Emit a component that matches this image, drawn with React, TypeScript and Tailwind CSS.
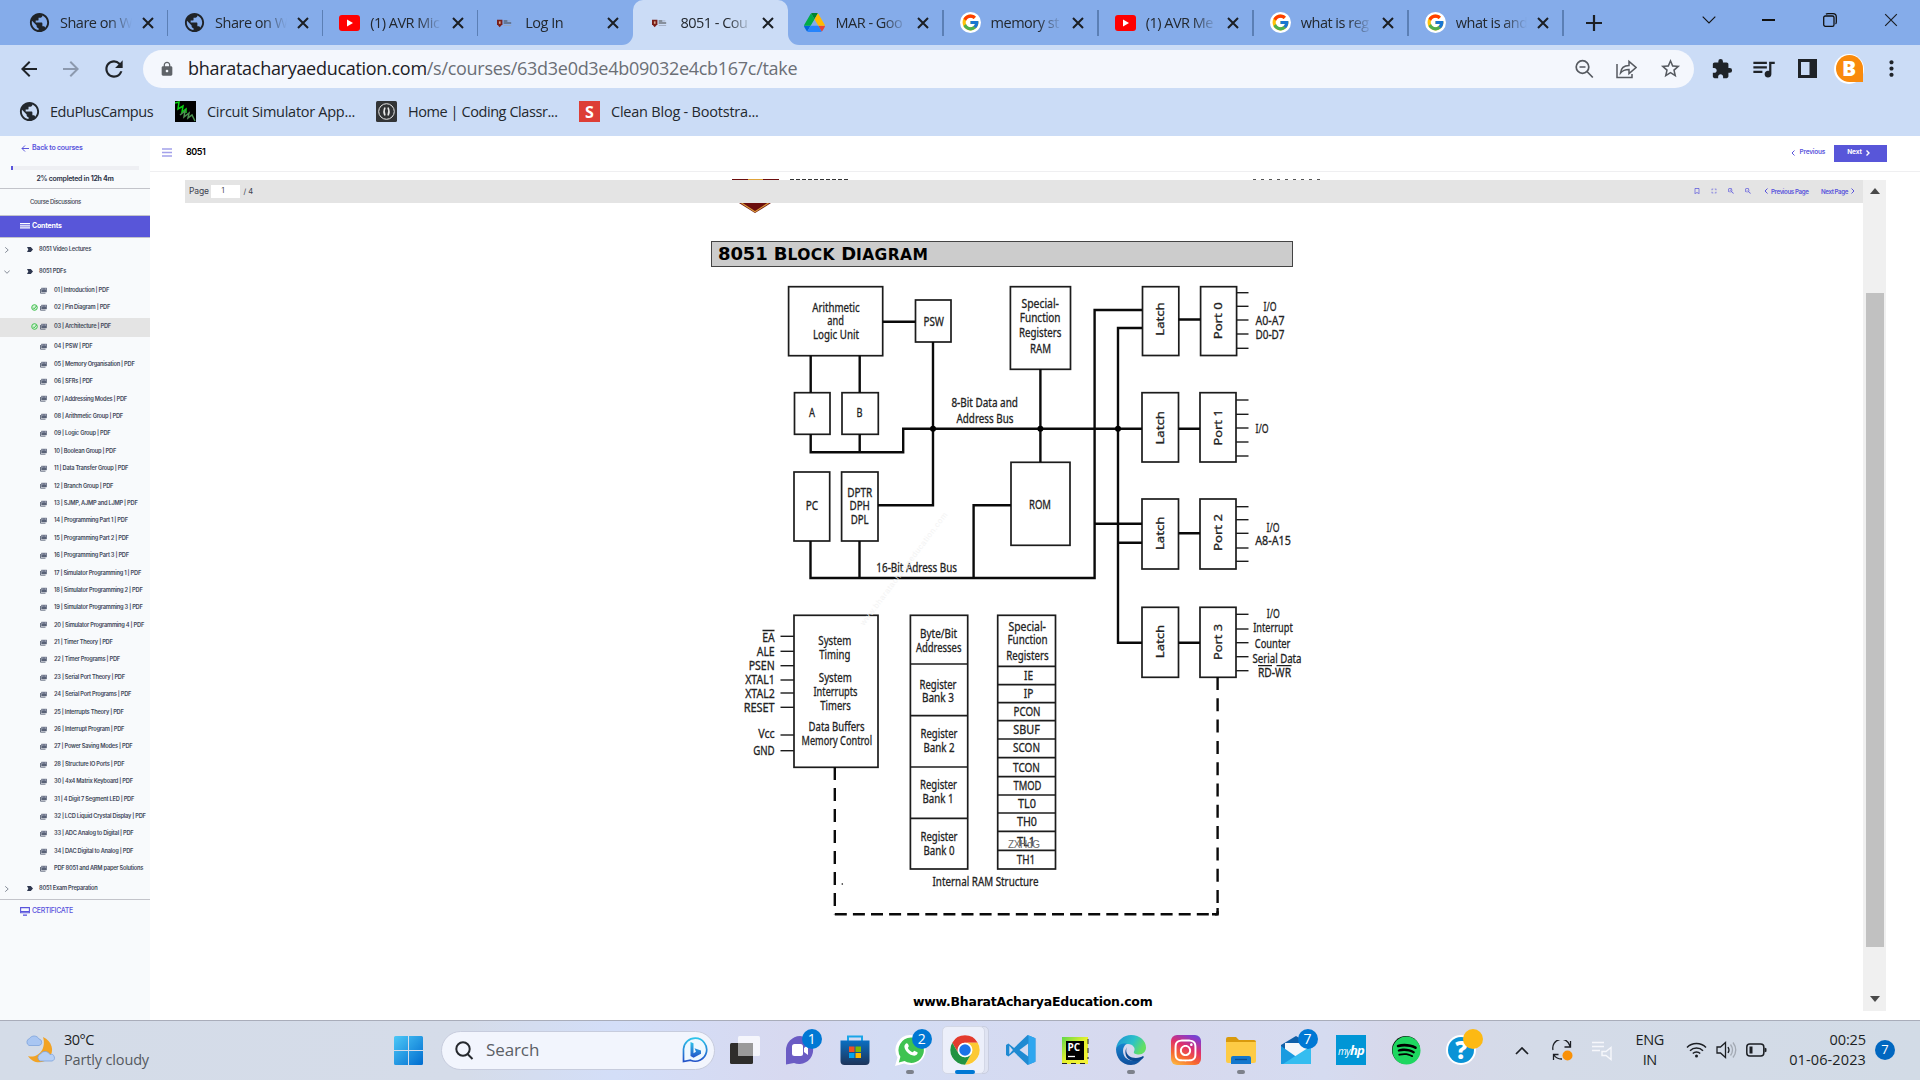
import React from "react";
import {
  MdPublic, MdArrowBack, MdArrowForward, MdRefresh, MdLock, MdStarBorder, MdExtension,
  MdQueueMusic, MdMoreVert, MdZoomIn, MdZoomOut, MdFullscreen, MdBookmarkBorder,
} from "react-icons/md";
import { FcGoogle } from "react-icons/fc";
import { FaSpotify, FaInstagram } from "react-icons/fa";

/* ---------- browser chrome ---------- */

const Crest = () => (
  <svg viewBox="0 0 20 12" className="h-[10px] w-[17px]">
    <path d="M1 2h6.500v5.500L4.200 11 1 7.500z" fill="#7a1f1a" />
    <path d="M3.300 4h2v3h-2z" fill="#d8a68c" />
    <path d="M9 3.500h4.500M9 6h9" stroke="#444" strokeWidth="1.300" />
    <path d="M14 3.500h3M9 9h9" stroke="#9aa3b5" strokeWidth=".9" />
  </svg>
);

const Drive = () => (
  <svg viewBox="0 0 87.3 78" className="h-[19px] w-[21px]">
    <path d="m6.6 66.85 3.85 6.65c.8 1.4 1.95 2.5 3.3 3.3l13.75-23.8h-27.5c0 1.55.4 3.1 1.2 4.5z" fill="#0066da" />
    <path d="m43.65 25-13.75-23.8c-1.35.8-2.5 1.9-3.3 3.3l-25.4 44a9.06 9.06 0 0 0-1.2 4.5h27.5z" fill="#00ac47" />
    <path d="m73.55 76.8c1.35-.8 2.5-1.9 3.3-3.3l1.6-2.75 7.65-13.25c.8-1.4 1.2-2.95 1.2-4.5h-27.502l5.852 11.5z" fill="#ea4335" />
    <path d="m43.65 25 13.75-23.8c-1.35-.8-2.9-1.2-4.5-1.2h-18.5c-1.6 0-3.15.45-4.5 1.2z" fill="#00832d" />
    <path d="m59.8 53h-32.3l-13.75 23.8c1.35.8 2.9 1.2 4.5 1.2h50.8c1.6 0 3.15-.45 4.5-1.2z" fill="#2684fc" />
    <path d="m73.4 26.5-12.7-22c-.8-1.4-1.95-2.5-3.3-3.3l-13.75 23.8 16.15 28h27.45c0-1.55-.4-3.1-1.2-4.5z" fill="#ffba00" />
  </svg>
);

const Favicon = ({ kind }: { kind: string }) => {
  if (kind === "globe") return <MdPublic className="size-[23px] shrink-0 text-[#1f2328]" />;
  if (kind === "youtube")
    return (
      <svg viewBox="0 0 21 16" className="h-4 w-[21px]">
        <rect width="21" height="16" rx="3" fill="#f00" />
        <path d="M8 4.5v7l6-3.5z" fill="#fff" />
      </svg>
    );
  if (kind === "drive") return <Drive />;
  if (kind === "google")
    return (
      <span className="grid size-[21px] place-items-center rounded-full bg-white">
        <FcGoogle className="size-[19px]" />
      </span>
    );
  return <Crest />;
};

const Cross = ({ s = 12, w = 2 }: { s?: number; w?: number }) => (
  <svg width={s} height={s} viewBox="0 0 12 12">
    <path d="M1 1l10 10M11 1L1 11" stroke="#1b1f24" strokeWidth={w} fill="none" />
  </svg>
);

const tabs = [
  { kind: "globe", title: "Share on W", sep: true },
  { kind: "globe", title: "Share on W", sep: true },
  { kind: "youtube", title: "(1) AVR Mic", sep: true },
  { kind: "crest", title: "Log In", sep: false },
  { kind: "crest", title: "8051 - Cou", active: true, sep: false },
  { kind: "drive", title: "MAR - Goo", sep: true },
  { kind: "google", title: "memory st", sep: true },
  { kind: "youtube", title: "(1) AVR Me", sep: true },
  { kind: "google", title: "what is reg", sep: true },
  { kind: "google", title: "what is and", sep: true },
];

const TabStrip = () => (
  <div className="flex h-[45px] items-center bg-[#85acea] pl-[13px]">
    {tabs.map((t, i) => (
      <div
        key={i}
        className={
          "relative flex h-full w-[155.1px] shrink-0 items-center pl-4 " +
          (t.active ? "rounded-t-[10px] bg-[#cbdcf6]" : "")
        }
      >
        {t.active && (
          <>
            <div className="absolute -left-[11px] bottom-0 size-[11px] bg-[#cbdcf6]">
              <div className="size-full rounded-br-[11px] bg-[#85acea]" />
            </div>
            <div className="absolute -right-[11px] bottom-0 size-[11px] bg-[#cbdcf6]">
              <div className="size-full rounded-bl-[11px] bg-[#85acea]" />
            </div>
          </>
        )}
        <span className="flex w-[21px] shrink-0 justify-center">
          <Favicon kind={t.kind} />
        </span>
        <span className="ml-[10px] w-[72px] overflow-hidden whitespace-nowrap text-[14.5px] tracking-[-0.5px] text-[#23282e] [mask-image:linear-gradient(to_right,#000_66%,transparent_100%)]">
          {t.title}
        </span>
        <span className="ml-[10px]">
          <Cross />
        </span>
        {t.sep && <span className="ml-[13px] h-[26px] w-[1.5px] bg-[#5b7fb5]" />}
      </div>
    ))}
    <svg width="16" height="16" viewBox="0 0 16 16" className="ml-[22px]">
      <path d="M8 0v16M0 8h16" stroke="#1b1f24" strokeWidth="2.2" />
    </svg>
    <div className="mb-[5px] ml-auto flex items-center pr-[22px]">
      <svg width="14" height="8" viewBox="0 0 14 8" className="mr-[46px]">
        <path d="M.7.7L7 7 13.300.7" fill="none" stroke="#111" strokeWidth="1.1" />
      </svg>
      <span className="mr-[48px] h-[1.5px] w-[13px] bg-[#111]" />
      <svg width="14" height="14" viewBox="0 0 14 14" className="mr-[47px]">
        <rect x=".7" y="3" width="10.300" height="10.300" rx="1.6" fill="none" stroke="#111" strokeWidth="1.3" />
        <path d="M3 1.200Q3.500.7 5 .7h5Q13.300.7 13.300 4v5q0 1.500-.8 2" fill="none" stroke="#111" strokeWidth="1.3" />
      </svg>
      <Cross s={14} w={1} />
    </div>
  </div>
);

const AddressBar = () => (
  <div className="flex h-[48px] items-center pb-px">
    <MdArrowBack className="ml-[17px] size-6 text-[#1f2328]" />
    <MdArrowForward className="ml-[18px] size-6 text-[#8c99ae]" />
    <MdRefresh className="ml-[18px] size-[26px] text-[#1f2328]" />
    <div className="ml-[16px] flex h-[38px] w-[1551px] items-center rounded-full bg-[#f4f7fd]">
      <MdLock className="ml-[16px] size-[16px] text-[#5f6368]" />
      <span className="ml-[13px] whitespace-nowrap text-[18px] tracking-[-0.29px] text-[#6b6f76]">
        <span className="text-[#1c2025]">bharatacharyaeducation.com</span>
        /s/courses/63d3e0d3e4b09032e4cb167c/take
      </span>
      <div className="ml-auto flex items-center gap-[22px] pr-[12px] text-[#565a60]">
        <svg width="20" height="20" viewBox="0 0 20 20" fill="none" stroke="currentColor" strokeWidth="1.7">
          <circle cx="8.500" cy="8" r="6.300" />
          <path d="M13 12.500L18.800 18.500M5.500 8h6" />
        </svg>
        <svg width="21" height="20" viewBox="0 0 21 20" fill="none" stroke="currentColor" strokeWidth="1.5">
          <path d="M1 5v13.500h15V15" />
          <path d="M4.500 14C5 9 8 6.500 13 6.500V2.500L20 8.500l-7 6v-4c-4 0-6.500 1-8.500 3.500z" />
        </svg>
        <MdStarBorder className="size-[23px]" />
      </div>
    </div>
    <div className="flex items-center text-[#1f2328]">
      <MdExtension className="ml-[17px] size-[22px]" />
      <MdQueueMusic className="ml-[17px] size-[27px]" />
      <svg width="19" height="19" viewBox="0 0 19 19" className="ml-[21px]">
        <path d="M0 0h19v19H0zM3 3v13h8.500V3z" fill="currentColor" fillRule="evenodd" />
      </svg>
      <span className="ml-[17px] grid size-[30px] place-items-center rounded-full bg-white">
        <span className="grid size-[27px] place-items-center rounded-full rounded-br-[6px] bg-[#f98a0c] text-[21px] font-extrabold leading-none text-white">
          B
        </span>
      </span>
      <MdMoreVert className="ml-[15px] size-[25px]" />
    </div>
  </div>
);

const BookmarkBar = () => (
  <div className="flex h-[43px] items-center whitespace-nowrap text-[14.5px] text-[#23282e] [&>span]:mt-[-6px] [&>svg]:mt-[-6px]">
    <MdPublic className="ml-[18px] size-[23px]" />
    <span className="ml-[9px] w-[125px] tracking-[-0.48px]">EduPlusCampus</span>
    <svg width="21" height="21" viewBox="0 0 21 21">
      <rect width="21" height="21" />
      <path d="M0 2l4-1-1 7 5-3-1 6 4-3 0 4" stroke="#0bd012" strokeWidth="1.500" fill="none" />
      <path d="M5 14l5-4-1 6 5-4-1 5 4-3 3 6" stroke="#4c8f50" strokeWidth="1.500" fill="none" />
    </svg>
    <span className="ml-[11px] w-[169px] tracking-[-0.28px]">Circuit Simulator App...</span>
    <svg width="21" height="21" viewBox="0 0 21 21">
      <rect width="21" height="21" rx="1.500" fill="#323436" />
      <g fill="none" stroke="#e8e8e8">
        <circle cx="10.500" cy="10.500" r="7.800" strokeWidth="1" />
        <path d="M9 6.500q-2 4 0 8M12 6.500q2 4 0 8" strokeWidth="1.500" />
      </g>
    </svg>
    <span className="ml-[11px] w-[171px] tracking-[-0.43px]">Home | Coding Classr...</span>
    <span className="grid size-[21px] place-items-center bg-[#dd3e36] text-[16px] font-bold leading-none text-white">S</span>
    <span className="ml-[11px] tracking-[-0.22px]">Clean Blog - Bootstra...</span>
  </div>
);

/* ---------- course sidebar ---------- */

const lessons = [
  "04 | PSW | PDF", "05 | Memory Organisation | PDF", "06 | SFRs | PDF", "07 | Addressing Modes | PDF",
  "08 | Arithmetic Group | PDF", "09 | Logic Group | PDF", "10 | Boolean Group | PDF",
  "11 | Data Transfer Group | PDF", "12 | Branch Group | PDF", "13 | SJMP, AJMP and LJMP | PDF",
  "14 | Programming Part 1 | PDF", "15 | Programming Part 2 | PDF", "16 | Programming Part 3 | PDF",
  "17 | Simulator Programming 1 | PDF", "18 | Simulator Programming 2 | PDF",
  "19 | Simulator Programming 3 | PDF", "20 | Simulator Programming 4 | PDF", "21 | Timer Theory | PDF",
  "22 | Timer Programs | PDF", "23 | Serial Port Theory | PDF", "24 | Serial Port Programs | PDF",
  "25 | Interrupts Theory | PDF", "26 | Interrupt Program | PDF", "27 | Power Saving Modes | PDF",
  "28 | Structure IO Ports | PDF", "30 | 4x4 Matrix Keyboard | PDF", "31 | 4 Digit 7 Segment LED | PDF",
  "32 | LCD Liquid Crystal Display | PDF", "33 | ADC Analog to Digital | PDF",
  "34 | DAC Digital to Analog | PDF", "PDF 8051 and ARM paper Solutions",
];

const DocIcon = () => (
  <svg width="7" height="7" viewBox="0 0 7 7" className="shrink-0">
    <path d="M.5 2v4.200h5" fill="none" stroke="#5b6478" strokeWidth=".9" />
    <rect x="1.300" y=".8" width="5.500" height="4.400" fill="#596277" />
    <path d="M2.200 2h1.300M4.500 2h1.500" stroke="#eef" strokeWidth=".7" />
  </svg>
);

const Done = () => (
  <svg width="7" height="7" viewBox="0 0 7 7" className="shrink-0">
    <circle cx="3.500" cy="3.500" r="2.800" fill="#d9f5dd" stroke="#3fbf4b" strokeWidth="1" />
    <path d="M2 3.600l1.200 1.200L5.500 2" fill="none" stroke="#2fae3c" strokeWidth=".9" />
  </svg>
);

const Lesson = ({ title, done, cls }: { title: string; done?: boolean; cls: string }) => (
  <div className={"flex items-center whitespace-nowrap text-[#3d4658] " + cls}>
    <span className="ml-[31px] flex w-2 shrink-0">{done && <Done />}</span>
    <span className="ml-px"><DocIcon /></span>
    <span className="ml-[7px] text-[5.7px] font-semibold tracking-[-0.24px]">{title}</span>
  </div>
);

const Section = ({ title, open, cls }: { title: string; open?: boolean; cls: string }) => (
  <div className={"flex items-center whitespace-nowrap " + cls}>
    <svg width="6" height="6" viewBox="0 0 6 6" className="ml-[3.500px] mt-px">
      <path d={open ? "M.3 1.500L3 4.300 5.700 1.500" : "M1.200.3L4.200 3 1.200 5.700"} fill="none" stroke="#6b7280" strokeWidth=".8" />
    </svg>
    <svg width="6" height="5" viewBox="0 0 6 5" className="ml-[17px]">
      <path d="M0 0h3.800L6 2.500 3.800 5H0l1.300-2.500z" fill="#2f3850" />
    </svg>
    <span className="ml-[6.500px] text-[5.700px] font-semibold tracking-[-0.22px] text-[#3d4658]">{title}</span>
  </div>
);

const Sidebar = () => (
  <aside className="flex w-[150px] shrink-0 flex-col bg-[#f8fafc] font-[Inter,sans-serif]">
    <div className="flex h-[24px] items-center pl-[21px] text-[#5a55dc]">
      <svg width="8" height="7" viewBox="0 0 8 7">
        <path d="M8 3.500H1M4 .5l-3 3 3 3" fill="none" stroke="currentColor" strokeWidth="1" />
      </svg>
      <span className="ml-[3px] text-[7px] font-semibold tracking-[-0.24px]">Back to courses</span>
    </div>
    <div className="ml-[11px] mt-[6px] h-1 w-32 bg-[#eeeff3]">
      <div className="h-full w-0.5 bg-[#5a55dc]" />
    </div>
    <div className="flex h-[19px] items-center justify-center border-b border-[#c3c4ca] text-[7px] font-semibold tracking-[-0.28px] text-[#2d3447]">
      <span>2% completed in <b className="font-bold">12h 4m</b></span>
    </div>
    <div className="flex h-[27px] items-center border-b border-[#c3c4ca] pb-0.5 pl-[30px] text-[6px] font-medium tracking-[-0.33px] text-[#3d4350]">
      Course Discussions
    </div>
    <div className="flex h-[22px] items-center border-b border-[#c3c4ca] bg-[#5856d9] pl-5 text-white">
      <svg width="10" height="6" viewBox="0 0 10 6" className="mb-px">
        <path d="M0 .7h10M0 2.800h10M0 4.900h10" stroke="#fff" strokeWidth="1.200" />
      </svg>
      <span className="ml-0.5 text-[7px] font-bold tracking-[-0.2px]">Contents</span>
    </div>
    <Section title="8051 Video Lectures" cls="h-[22px]" />
    <Section title="8051 PDFs" open cls="h-[22px]" />
    <Lesson title="01 | Introduction | PDF" cls="h-[17px]" />
    <Lesson title="02 | Pin Diagram | PDF" done cls="h-[17px] mb-[2px]" />
    <Lesson title="03 | Architecture | PDF" done cls="h-[19px] bg-[#e4e4e4] pb-[2px]" />
    <div className="mt-px">
      {lessons.map((l) => (
        <Lesson key={l} title={l} cls="h-[17.4px]" />
      ))}
    </div>
    <Section title="8051 Exam Preparation" cls="h-[22px]" />
    <div className="flex h-[24px] items-center border-t border-[#c3c4ca] pl-5 text-[#5a55dc]">
      <svg width="10" height="9" viewBox="0 0 10 9">
        <path d="M.6.6h8.800v5.200H.6zM.6 4.500h8.800" fill="none" stroke="currentColor" strokeWidth="1.100" />
        <path d="M3 7.500h4v1.300H3z" fill="currentColor" />
      </svg>
      <span className="ml-0.5 text-[7px] font-medium tracking-[-0.32px]">CERTIFICATE</span>
    </div>
  </aside>
);

/* ---------- block diagram ---------- */

type Rect = [number, number, number, number];
const boxes: Rect[] = [
  [788.6, 286.7, 882.7, 355.7], [915.5, 300, 951, 342], [1010.4, 286.7, 1070.5, 369.3],
  [1142.5, 286.7, 1178.8, 355.5], [1200.6, 286.7, 1236.6, 355.5],
  [794.5, 392.7, 830, 434.3], [842, 392.7, 878.3, 434.3],
  [794, 472, 829.7, 541], [841.6, 472, 878, 541], [1011, 462.3, 1070, 545.3],
  [1142, 392.7, 1178.5, 462], [1200, 392.7, 1236, 462],
  [1142, 499, 1178.5, 569], [1200, 499, 1236, 569],
  [1142, 607.3, 1178.5, 677.3], [1200, 607.3, 1236, 677.3],
  [794, 615.3, 878, 767.3], [910.4, 615.3, 967.7, 869], [997.7, 615.3, 1055.5, 869],
];

// text, x, baseline, width
type Label = [string, number, number, number];
const centered: Label[] = [
  ["Arithmetic", 836, 311.5, 47.5], ["and", 835.6, 325.3, 16.6], ["Logic Unit", 836, 339, 46],
  ["PSW", 933.7, 326.3, 20.5], ["Special-", 1040.2, 308, 37.5], ["Function", 1040.2, 322, 40.7],
  ["Registers", 1040.2, 336.5, 42.3], ["RAM", 1040.6, 353, 21],
  ["I/O", 1270, 311.3, 13], ["A0-A7", 1270, 325, 29], ["D0-D7", 1270, 338.7, 29],
  ["8-Bit Data and", 984.7, 406.7, 66.5], ["Address Bus", 985, 422.7, 57],
  ["A", 812, 417.3, 6], ["B", 859.4, 417.3, 6], ["PC", 812, 509.7, 12.5],
  ["DPTR", 859.7, 496.7, 25], ["DPH", 859.7, 510.3, 20.5], ["DPL", 859.7, 524, 18],
  ["ROM", 1040, 509, 22], ["16-Bit Adress Bus", 916.7, 571.7, 80.7],
  ["I/O", 1262, 432.7, 13], ["I/O", 1273, 532, 13], ["A8-A15", 1273, 545, 35.6],
  ["I/O", 1273.3, 618, 13], ["Interrupt", 1273, 632, 39.5], ["Counter", 1272.6, 647.7, 35.6],
  ["Serial Data", 1277, 663.3, 49], ["RD-WR", 1274.5, 677.3, 33],
  ["System", 834.8, 645, 33], ["Timing", 834.8, 659, 31], ["System", 835.3, 682.3, 33],
  ["Interrupts", 835.5, 696.3, 44], ["Timers", 835.5, 710.3, 30.5],
  ["Data Buffers", 836.6, 731, 56], ["Memory Control", 836.8, 745, 70.5],
  ["Byte/Bit", 938.6, 638, 37], ["Addresses", 938.7, 652.3, 45.5],
  ["Register", 938, 688.7, 37], ["Bank 3", 938, 702.3, 32],
  ["Register", 939, 738.3, 37], ["Bank 2", 939, 752.3, 31],
  ["Register", 938.5, 789.3, 37], ["Bank 1", 938, 803.3, 31],
  ["Register", 939, 841, 37], ["Bank 0", 939, 855, 31],
  ["Special-", 1027.2, 630.7, 37.5], ["Function", 1027.5, 644, 40], ["Registers", 1027.5, 659.7, 42.5],
  ["IE", 1028.5, 680, 9], ["IP", 1028.500, 697.7, 9.5], ["PCON", 1027, 716, 27], ["SBUF", 1026.5, 734.3, 26.5],
  ["SCON", 1026.5, 752.3, 27], ["TCON", 1026.5, 771.7, 27], ["TMOD", 1027.5, 790, 28],
  ["TL0", 1027, 808.3, 18], ["TH0", 1027, 826.3, 20], ["TL1", 1026, 846, 18], ["TH1", 1026, 864, 18.5],
  ["Internal RAM Structure", 985.5, 885.7, 106],
];
const pins: Label[] = [
  ["EA", 774.7, 642, 12.5], ["ALE", 774.7, 655.7, 18], ["PSEN", 774.7, 669.7, 26], ["XTAL1", 774.7, 684.3, 29.5],
  ["XTAL2", 774.7, 697.7, 29.5], ["RESET", 774.7, 712, 31], ["Vcc", 774.7, 738.3, 16.5], ["GND", 774.7, 754.7, 21.5],
];
const vertical: Label[] = [
  ["Latch", 1164.2, 319, 33.5], ["Port 0", 1222, 320.8, 37], ["Latch", 1163.7, 427.8, 33.5], ["Port 1", 1221.500, 427.5, 36],
  ["Latch", 1163.7, 533.3, 33.5], ["Port 2", 1221.500, 532.5, 37], ["Latch", 1163.7, 641.5, 33.5], ["Port 3", 1221.500, 642, 36],
];
const bankLines = [664, 715.7, 767, 818.3];
const sfrLines = [666.3, 684.7, 702.7, 720.7, 739, 757.7, 776.7, 795, 813, 831.3, 850.3];
const portTicks = [
  292.7, 306.3, 320, 334, 348.3, 400, 414.3, 428, 442, 456,
  506.7, 519.7, 533.3, 548, 561.3, 614.3, 629, 642.7, 656.7, 670.7,
];
const pinTicks = [636.3, 651.3, 665.7, 680, 693, 707.3, 735, 750.7];

const BlockDiagram = () => (
  <svg width="620" height="660" viewBox="700 270 620 660" className="block">
    <g fill="none" stroke="#1c1c1c" strokeWidth="1.7">
      {boxes.map(([a, b, c, d], i) => (
        <rect key={i} x={a} y={b} width={c - a} height={d - b} />
      ))}
      {bankLines.map((y) => <path key={y} d={`M910.4 ${y}H967.7`} />)}
      {sfrLines.map((y) => <path key={y} d={`M997.7 ${y}H1055.5`} />)}
      {portTicks.map((y) => <path key={y} d={`M1236 ${y}h12.5`} strokeWidth="1.400" />)}
      {pinTicks.map((y) => <path key={y} d={`M780.500 ${y}h13.500`} strokeWidth="1.400" />)}
      <path d="M762.500 630.500h12M1258 665.700h14M1276.500 665.700h15" strokeWidth="1.300" />
    </g>
    <g fill="none" stroke="#0a0a0a" strokeWidth="2.400">
      <path d="M882.7 321.7H915.500M810.7 355.7V392.7M859.7 355.7V392.7" />
      <path d="M933 342V505.300H878M810.700 434V452.300H903.200V428.700H1142M859.700 434V452.300" />
      <path d="M1040.400 369V462M1142 310H1094.600V578H810.500V541M859.500 541V578M1011 505.300H973.600V578" />
      <path d="M1142 328H1118V642.700H1142M1094.600 523.700H1142M1118 542.700H1142" />
      <path d="M1178.500 319.500H1200.500M1178.500 428.700H1200M1178.500 533.300H1200M1178.500 642.700H1200" />
      <path d="M834.800 767V914.300" strokeDasharray="13 8" />
      <path d="M834.800 914.300H1217.600" strokeDasharray="12 6.100" />
      <path d="M1217.600 677V914.300" strokeDasharray="13 8.300" />
      <path d="M1217.600 908V914.300H1212" />
    </g>
    <circle cx="933" cy="428.700" r="3" />
    <circle cx="1040.400" cy="428.700" r="3" />
    <circle cx="1118" cy="428.700" r="3" />
    <circle cx="842.300" cy="884" r=".8" />
    <g className="font-['Noto_Sans',sans-serif] text-[12.5px]" fill="#222" stroke="#222" strokeWidth=".3">
      {centered.map(([t, x, y, w], i) => (
        <text key={i} x={x} y={y} textLength={w} lengthAdjust="spacingAndGlyphs" textAnchor="middle">{t}</text>
      ))}
      {pins.map(([t, x, y, w]) => (
        <text key={t} x={x} y={y} textLength={w} lengthAdjust="spacingAndGlyphs" textAnchor="end">{t}</text>
      ))}
      {vertical.map(([t, x, y, w]) => (
        <text
          key={t + y} transform={`translate(${x} ${y}) rotate(-90)`}
          textLength={w} lengthAdjust="spacingAndGlyphs" textAnchor="middle" className="text-[11px]"
        >
          {t}
        </text>
      ))}
    </g>
    <text x="1024" y="847.500" textAnchor="middle" textLength="32" fill="#6a6a6a" className="font-['Liberation_Sans',sans-serif] text-[10px]">ZXHdG</text>
    <text transform="translate(864 626) rotate(-53)" fill="#f3f3f3" textLength="139" className="font-['Liberation_Sans',sans-serif] text-[8px]">
      www.bharatacharyaeducation.com
    </text>
  </svg>
);

/* ---------- main content ---------- */

const Chev = ({ left, w = 1 }: { left?: boolean; w?: number }) => (
  <svg width="4" height="6" viewBox="0 0 4 6">
    <path d={left ? "M3.500.5L1 3l2.500 2.500" : "M.5.5L3 3 .5 5.500"} fill="none" stroke="currentColor" strokeWidth={w} />
  </svg>
);

const Course = () => (
  <main className="flex min-w-0 flex-1 flex-col bg-white">
    <header className="flex h-9 items-center border-b border-[#efeff1] pb-[3px] pl-3 pr-[33px] font-[Inter,sans-serif] text-[#5a55dc]">
      <svg width="10" height="9" viewBox="0 0 10 9">
        <path d="M0 1h10M0 4.500h10M0 8h10" stroke="#a3a1ea" strokeWidth="1.500" />
      </svg>
      <h1 className="ml-[14px] text-[9px] font-semibold tracking-[-0.45px] text-black">8051</h1>
      <span className="ml-auto mt-[2px] flex items-center gap-[5px] text-[6.500px] font-semibold tracking-[-0.25px]">
        <Chev left />
        Previous
      </span>
      <button className="ml-[9px] mt-[3px] flex h-[17px] w-[53px] items-center justify-center gap-[4px] bg-[#5856d9] pb-0.5 pr-1 text-[6.500px] font-bold tracking-[-0.1px] text-white">
        Next
        <Chev w={1.4} />
      </button>
    </header>
    <section className="ml-[35px] mt-[7px] flex h-[832px] w-[1702px]">
      <div className="flex w-[1679px] flex-col">
        <div className="flex h-px items-start">
          <span className="ml-[547px] h-px w-[47px] bg-[linear-gradient(90deg,#6b0d0d_0_35%,#e0a33a_35%_65%,#6b0d0d_65%)]" />
          <span className="ml-[11px] h-px w-[58px] bg-[repeating-linear-gradient(90deg,#333_0_4px,#fff_4px_6px)]" />
          <span className="ml-[405px] h-px w-[67px] bg-[repeating-linear-gradient(90deg,#555_0_3px,#fff_3px_8px)]" />
        </div>
        <div className="flex h-[23px] shrink-0 items-center bg-[#e4e4e4] pl-1 pr-[9px] font-[Inter,sans-serif] text-[#3d4350]">
          <span className="text-[8.500px] tracking-[-0.1px]">Page</span>
          <span className="ml-[2.500px] flex h-[13px] w-[29px] items-center bg-white pl-2.5 text-[7px]">1</span>
          <span className="ml-[3px] text-[7.500px]">/ 4</span>
          <div className="ml-auto flex items-center text-[6.200px] font-semibold tracking-[-0.4px] text-[#5a55dc]">
            <MdBookmarkBorder className="mr-[9px] size-2" />
            <MdFullscreen className="mr-[9px] size-2" />
            <MdZoomIn className="mr-[9px] size-2" />
            <MdZoomOut className="mr-[12px] size-2" />
            <Chev left />
            <span className="ml-[3px] w-[50px]">Previous Page</span>
            <span className="mr-[3px]">Next Page</span>
            <Chev />
          </div>
        </div>
        <div className="flex flex-col pl-[515px]">
          <svg width="32" height="10" viewBox="0 0 32 10" className="ml-[39px]">
            <path d="M0 0h32L16 10z" fill="#6b0d0d" />
            <path d="M2.500 0L16 8.700 29.500 0" fill="none" stroke="#d99a3a" strokeWidth="1.200" />
          </svg>
          <h2 className="ml-[11px] mt-[28px] flex h-[26px] w-[582px] items-center border-[1.5px] border-[#444] bg-[#ccc] pl-[6px] font-['DejaVu_Sans',sans-serif] text-[18px] font-bold leading-none tracking-[-0.1px] text-black">
            <span className="whitespace-nowrap">
              8051 B<span className="text-[15.500px] tracking-[0.4px]">LOCK</span> D
              <span className="text-[15.500px] tracking-[0.4px]">IAGRAM</span>
            </span>
          </h2>
          <div className="mt-[3px]">
            <BlockDiagram />
          </div>
          <p className="ml-[213px] mt-[63px] whitespace-nowrap font-['DejaVu_Sans',sans-serif] text-[12.500px] font-bold tracking-[-0.25px] text-black">
            www.BharatAcharyaEducation.com
          </p>
        </div>
      </div>
      <div className="-ml-px mt-px flex h-[831px] w-[23px] flex-col items-center bg-[#f0f0f0]">
        <svg width="10" height="6" viewBox="0 0 10 6" className="mt-[8px]">
          <path d="M0 6L5 0l5 6z" fill="#4a4a4a" />
        </svg>
        <div className="mt-[99px] h-[654px] w-[18px] bg-[#c1c1c1]" />
        <svg width="10" height="6" viewBox="0 0 10 6" className="mt-[49px]">
          <path d="M0 0l5 6 5-6z" fill="#4a4a4a" />
        </svg>
      </div>
    </section>
  </main>
);

/* ---------- taskbar ---------- */

const Slot = ({ children, badge, bg, dot }: { children: React.ReactNode; badge?: string; bg?: string; dot?: boolean }) => (
  <div className="relative flex h-full w-[55.1px] shrink-0 items-center justify-center pb-px">
    {children}
    {badge !== undefined && (
      <span
        className={
          "absolute right-[6px] top-[8px] grid size-5 place-items-center rounded-full text-[14px] leading-none text-white " +
          (bg ?? "bg-[#0078d4]")
        }
      >
        {badge}
      </span>
    )}
    {dot && <span className="absolute bottom-[6px] h-1 w-2 rounded-full bg-[#7d818b]" />}
  </div>
);

const TaskIcons = () => (
  <>
    <Slot>
      <svg width="30" height="28" viewBox="0 0 30 28">
        <rect y="7" width="23" height="21" rx="1.500" fill="#2e2d2b" />
        <rect x="8" width="22" height="20" rx="1.500" fill="#fff" opacity=".75" />
        <path d="M8 7h15v13H8z" fill="#9a9a9a" />
      </svg>
    </Slot>
    <Slot badge="1">
      <svg width="30" height="29" viewBox="0 0 30 29">
        <path d="M15 0a14 14 0 1 1-6 27L1 28.500V15A14.500 14.500 0 0 1 15 0z" fill="#6b5cc4" />
        <rect x="7" y="8" width="11" height="12" rx="2.500" fill="#fff" />
        <path d="M19 12l4-3v10l-4-3z" fill="#fff" />
      </svg>
    </Slot>
    <Slot>
      <svg width="30" height="30" viewBox="0 0 30 30">
        <defs><linearGradient id="st" x2="0" y2="1"><stop stopColor="#0a6fc2" /><stop offset="1" stopColor="#1d3459" /></linearGradient></defs>
        <path d="M8 6V1.500h14V6" fill="none" stroke="#1aa5e8" strokeWidth="2" />
        <path d="M.5 5.500h29V26a4 4 0 0 1-4 4h-21a4 4 0 0 1-4-4z" fill="url(#st)" />
        <path d="M9 11.500h5.500V17H9z" fill="#f25022" /><path d="M15.500 11.500H21V17h-5.500z" fill="#7fba00" />
        <path d="M9 18h5.500v5H9z" fill="#00a4ef" /><path d="M15.500 18H21v5h-5.500z" fill="#ffb900" />
      </svg>
    </Slot>
    <Slot badge="2" dot>
      <svg width="31" height="31" viewBox="0 0 31 31">
        <path d="M16 0a15 15 0 1 1-7 28.500L0 31l2.500-8.500A15 15 0 0 1 16 0z" fill="#fff" />
        <path d="M16 2.500a12.700 12.700 0 1 1-6.500 23.500L3.800 27.500l1.600-5.700A12.700 12.700 0 0 1 16 2.500z" fill="#3fc351" />
        <path d="M11 8.500c1-.6 2 .2 2.700 2.200.3.900-.8 1.600-.8 2.200 1 2 2.500 3.400 4.600 4.300.8 0 1.400-1.600 2.200-1.300l2.800 1.400c.6 1.700-1.300 3.500-3.300 3.400-5-.6-9.400-5-9.800-9 0-1.300.6-2.400 1.600-3.200z" fill="#fff" />
      </svg>
    </Slot>
    <div className="relative flex h-full w-[55.1px] shrink-0 items-center justify-center pb-px">
      <span className="absolute left-[5px] top-[5px] h-12 w-[46px] rounded-[5px] border border-[#c9cee0] bg-[#dfe3f2]" />
      <span className="absolute left-[4px] top-[5px] h-12 w-[43px] rounded-[5px] border border-[#d3d7e6] bg-[#eceffa]" />
      <svg width="30" height="30" viewBox="0 0 48 48" className="relative">
        <circle cx="24" cy="24" r="23.500" fill="#fff" />
        <path d="M3.600 12.300A23.500 23.500 0 0 1 44.400 12.300H24A11.700 11.700 0 0 0 13.900 30z" fill="#e33b2e" />
        <path d="M44.400 12.300A23.500 23.500 0 0 1 24 47.500l10.100-17.600A11.700 11.700 0 0 0 24 12.300z" fill="#fcc934" />
        <path d="M24 47.500A23.500 23.500 0 0 1 3.600 12.300l10.300 17.600a11.700 11.700 0 0 0 20.200 0z" fill="#229342" />
        <circle cx="24" cy="24" r="11.500" fill="#fff" />
        <circle cx="24" cy="24" r="9.200" fill="#1a73e8" />
      </svg>
      <span className="absolute bottom-[6px] left-[17px] h-1 w-5 rounded-full bg-[#0078d4]" />
    </div>
    <Slot>
      <svg width="30" height="30" viewBox="0 0 100 100">
        <path d="M72 0l26 11v78l-26 11L27 57 8 71.500 0 67V33l8-4.500L27 43z" fill="#1f8ad2" />
        <path d="M74 28v44L45 50z" fill="#d6dcf2" />
        <path d="M11 36l12 14-12 14z" fill="#d6dcf2" />
        <path d="M72 0l26 11v78l-26 11c3-2 3-4 3-7V7c0-3-1-5-3-7z" fill="#2fa6ef" />
      </svg>
    </Slot>
    <Slot>
      <svg width="27" height="27" viewBox="0 0 27 27">
        <defs><linearGradient id="pc" x2="1" y2="1"><stop stopColor="#5fd84a" /><stop offset=".5" stopColor="#e6f02c" /><stop offset="1" stopColor="#f5f13a" /></linearGradient></defs>
        <path d="M0 0h26v27H0z" fill="url(#pc)" />
        <path d="M4 4h18v19H4z" />
        <path d="M0 26.500h26M26 2v20" stroke="#222" strokeDasharray="5 4" />
        <text x="5.500" y="13.500" fill="#fff" className="text-[10px] font-bold">PC</text>
        <path d="M6 19.500h7" stroke="#fff" strokeWidth="1.300" />
      </svg>
    </Slot>
    <Slot dot>
      <svg width="30" height="30" viewBox="0 0 30 30">
        <defs>
          <linearGradient id="e1" x2="1" y2=".4"><stop stopColor="#1c8fd6" /><stop offset=".6" stopColor="#2cc1c9" /><stop offset="1" stopColor="#63df63" /></linearGradient>
          <linearGradient id="e2" x2="0" y2="1"><stop stopColor="#1784cf" /><stop offset="1" stopColor="#0f4f9d" /></linearGradient>
        </defs>
        <path d="M0 14C1 5 8 0 15 0c9 0 15 6 15 12.500 0 4-3 7-7 7-3.500 0-6-1-5-3 2-3-1-7.500-6-7.500C6 9 1 12 0 14z" fill="url(#e1)" />
        <path d="M0 14C1 10 6 8 11 8.500c-3 2-4 4.500-4 7.500 0 6 5 11 13 9 3-.7 5-2 7-3.500-2 5-7 8.500-12 8.500C6 30 0 23 0 14z" fill="url(#e2)" />
        <path d="M11 12c-2 4 0 9 5 10.500 5 1.300 9-.3 11-1.500l1 1c-3 4.500-9 5-13 3.500C9 23 8 16 11 12z" fill="#0c4a92" />
      </svg>
    </Slot>
    <Slot>
      <span className="grid size-[30px] place-items-center rounded-[6px] bg-[linear-gradient(25deg,#fdc744_0%,#f7682f_30%,#e0306b_58%,#8a3bc8_85%,#5b52d8_100%)]">
        <FaInstagram className="size-[25px] text-white" />
      </span>
    </Slot>
    <Slot dot>
      <svg width="30" height="27" viewBox="0 0 30 27">
        <path d="M0 2Q0 0 2 0h8l3 3h15q2 0 2 2v6H0z" fill="#d99a0d" />
        <path d="M0 5h30v19q0 2-2 2H2q-2 0-2-2z" fill="#fdcb45" />
        <path d="M5 27v-6q0-2 2-2h16q2 0 2 2v6z" fill="#1377cd" />
        <path d="M9 22.500h12" stroke="#0a4f94" strokeWidth="1.300" />
      </svg>
    </Slot>
    <Slot badge="7">
      <svg width="30" height="28" viewBox="0 0 30 28">
        <path d="M0 9L15 0l15 9v19H0z" fill="#0f5fa8" />
        <path d="M4 7h22v8l-11 6L4 15z" fill="#f3f6fa" />
        <path d="M0 10l17 12-12 6H0z" fill="#1a9be0" />
        <path d="M30 10v18H2z" fill="#35bdf0" />
      </svg>
    </Slot>
    <Slot>
      <span className="grid h-[30px] w-[30px] place-items-center bg-[#0096d6] text-[10px] italic leading-none tracking-[-0.7px] text-white">
        <span>my<b className="text-[13px]">hp</b></span>
      </span>
    </Slot>
    <Slot>
      <span className="grid size-[28px] place-items-center rounded-full bg-black">
        <FaSpotify className="size-[29px] text-[#1ed760]" />
      </span>
    </Slot>
    <Slot badge="" bg="bg-[#fdb913]">
      <span className="grid size-[30px] place-items-center rounded-full bg-white">
        <span className="grid size-[26px] place-items-center rounded-full bg-[#0a93d6] text-[24px] font-extrabold leading-none text-white">?</span>
      </span>
    </Slot>
  </>
);

const Taskbar = () => (
  <footer className="flex h-[60px] items-center border-t border-[#a9adba] bg-[linear-gradient(90deg,#d4dce8_0%,#d5dce9_24%,#d3def8_32%,#d7d9f0_41%,#d3dcf4_46%,#d7d9ee_60%,#d5dbf0_69%,#d7d8ea_73%,#d4dbe8_80%,#d2dbe6_100%)] text-[#1c1f24]">
    <svg width="31" height="31" viewBox="0 0 31 31" className="mb-0.5 ml-[25px]">
      <path d="M18 3c9 4 12 14 6 21-6 6-16 6-21-2 9 3 19-6 15-19z" fill="#f2a324" />
      <path d="M4 11.500a3.800 3.800 0 0 1 .5-7A5.500 5.500 0 0 1 14 5a3.300 3.300 0 0 1 0 6.500z" fill="#a9c6f2" stroke="#7ea3dc" strokeWidth=".8" />
      <path d="M15 27a3.800 3.800 0 0 1 .5-7 5.500 5.500 0 0 1 9.500.5A3.300 3.300 0 0 1 27 27z" fill="#b7d0f5" stroke="#7ea3dc" strokeWidth=".8" />
    </svg>
    <div className="mb-0.5 ml-[8px] w-[330px] text-[14.500px] leading-5 tracking-[-0.15px]">
      <div className="tracking-[-0.5px]">30°C</div>
      <div className="text-[#55595f]">Partly cloudy</div>
    </div>
    <svg width="29" height="29" viewBox="0 0 29 29">
      <defs><linearGradient id="wn" x2="1" y2="1"><stop stopColor="#4cc8f7" /><stop offset="1" stopColor="#006ccf" /></linearGradient></defs>
      <path d="M0 1.500Q0 0 1.500 0H14v14H0zM15 0h12.500Q29 0 29 1.500V14H15zM0 15h14v14H1.500Q0 29 0 27.500zM15 15h14v12.500q0 1.500-1.500 1.500H15z" fill="url(#wn)" />
    </svg>
    <div className="mb-px ml-[18px] flex h-[39px] w-[274px] items-center rounded-full border border-[#c7ccdd] bg-[#f2f5fd]">
      <svg width="19" height="19" viewBox="0 0 19 19" className="ml-[13px]" fill="none" stroke="#25282d" strokeWidth="2">
        <circle cx="8" cy="8" r="6.700" /><path d="M12.500 13l5 5" />
      </svg>
      <span className="ml-[12px] text-[17px] tracking-[-0.1px] text-[#5b5f66]">Search</span>
      <svg width="26" height="26" viewBox="0 0 26 26" className="ml-auto mr-[6px]">
        <defs><linearGradient id="bg" x2="0" y2="1"><stop stopColor="#2dc4ea" /><stop offset="1" stopColor="#2352c8" /></linearGradient></defs>
        <path d="M13.500 1.200a11.500 11.500 0 1 1-5 22L1.500 24.500V12A11.800 11.800 0 0 1 13.500 1.200z" fill="#eef8ff" stroke="url(#bg)" strokeWidth="1.700" />
        <path d="M8.500 5l3 1.200v10l2.500-1.400-1.500-3.600 6.500 2.300v3.300l-7.500 4-3-1.800z" fill="url(#bg)" />
      </svg>
    </div>
    <div className="ml-[2.500px] flex h-full">
      <TaskIcons />
    </div>
    <svg width="14" height="8" viewBox="0 0 14 8" className="ml-[26px]">
      <path d="M1 7l6-6 6 6" fill="none" stroke="currentColor" strokeWidth="1.700" />
    </svg>
    <svg width="21" height="21" viewBox="0 0 21 21" className="ml-[23px]" fill="none" stroke="currentColor" strokeWidth="1.300">
      <path d="M1 10A8.500 8.500 0 0 1 18 6M18.500 1v6h-6M10 19a9 9 0 0 1-8-4M1.500 20v-5.500h5" />
      <circle cx="15.500" cy="15.500" r="5" fill="#f99107" stroke="none" />
    </svg>
    <svg width="21" height="20" viewBox="0 0 21 20" className="ml-[19px]" fill="none" stroke="#f6f7fb" strokeWidth="1.400">
      <path d="M0 1.500h12M0 5.500h12M0 9.500h8M10 10.500h4l5-4v12l-5-4h-4z" />
    </svg>
    <div className="mb-0.5 ml-[21px] w-8 text-center text-[14.500px] leading-5 tracking-[-0.3px]">
      <div>ENG</div>
      <div>IN</div>
    </div>
    <svg width="21" height="17" viewBox="0 0 21 17" className="mb-0.5 ml-[20px]" fill="none" stroke="currentColor" strokeWidth="1.500">
      <path d="M1 6.500a13.500 13.500 0 0 1 19 0M4 9.700a9.200 9.200 0 0 1 13 0M6.800 12.500a5.200 5.200 0 0 1 7.400 0" />
      <circle cx="10.500" cy="15" r="1.500" fill="currentColor" stroke="none" />
    </svg>
    <svg width="21" height="18" viewBox="0 0 21 18" className="mb-0.5 ml-[9px]" fill="none" stroke="currentColor" strokeWidth="1.300">
      <path d="M1 6h3.500L9.500 1.500v15L4.500 12H1z" /><path d="M12 6q2 3 0 6" />
      <path d="M14.500 3.500q4 5.500 0 11M17 1.500q5.500 7.500 0 15" stroke="#a3a9b3" />
    </svg>
    <svg width="21" height="14" viewBox="0 0 21 14" className="mb-0.5 ml-[9px]">
      <rect x=".8" y="1" width="17" height="12" rx="3" fill="none" stroke="currentColor" strokeWidth="1.500" />
      <path d="M3.500 3.500h3v7h-3zM18.500 4.500l2 1v3l-2 1z" fill="currentColor" />
    </svg>
    <div className="mb-0.5 ml-auto text-right text-[14.500px] leading-5">
      <div className="tracking-[-0.1px]">00:25</div>
      <div className="tracking-[0.12px]">01-06-2023</div>
    </div>
    <span className="mb-0.5 ml-[9px] mr-[25px] grid size-5 shrink-0 place-items-center rounded-full bg-[#0067c0] text-[13px] leading-none text-white">7</span>
  </footer>
);

export default function App() {
  return (
    <div className="flex h-[1080px] w-[1920px] flex-col overflow-hidden bg-[#cbdcf6] font-['Open_Sans',sans-serif]">
      <TabStrip />
      <AddressBar />
      <BookmarkBar />
      <div className="flex h-[884px]">
        <Sidebar />
        <Course />
      </div>
      <Taskbar />
    </div>
  );
}
